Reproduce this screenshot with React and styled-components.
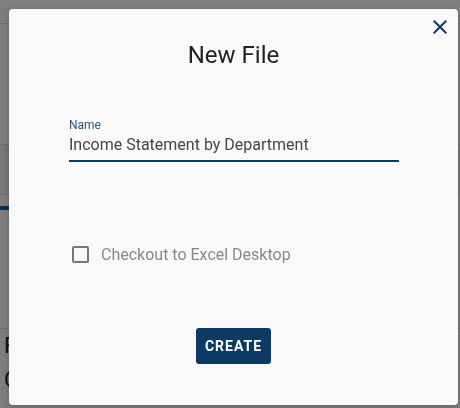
import styled, { createGlobalStyle } from "styled-components";

const GlobalStyle = createGlobalStyle`
  html, body {
    margin: 0;
    padding: 0;
    background: #ffffff;
    font-family: Roboto, "Liberation Sans", Arial, sans-serif;
  }
  * { box-sizing: border-box; }
`;

const Page = styled.div`
  width: 460px;
  height: 408px;
  overflow: hidden;
  background: #fff;
  display: flex;
  flex-direction: column;
`;

const PageHeader = styled.div`
  height: 24px;
  border-bottom: 1px solid #d8d8d8;
`;

const PageSection = styled.div`
  height: ${(p) => p.$h}px;
  background: ${(p) => p.$bg || "#fff"};
  border-bottom: 1px solid #dcdcdc;
`;

const BlueBar = styled.div`
  height: 4px;
  width: 60px;
  margin-top: 11px;
  background: #0b5fa5;
`;

const PageText = styled.div`
  padding-left: 4px;
  font-size: 22px;
  line-height: 34px;
  color: #1a1a1a;
`;

const Backdrop = styled.div`
  position: fixed;
  inset: 0;
  background: rgba(0, 0, 0, 0.5);
  padding: 9px 2px 3px 9px;
  display: flex;
`;

const Dialog = styled.div`
  position: relative;
  flex: 1;
  background: #f9f9f9;
  border-radius: 4px;
  box-shadow: 0 2px 8px rgba(0, 0, 0, 0.25);
  display: flex;
  flex-direction: column;
  padding: 32px 0 0 60px;
`;

const CloseButton = styled.button`
  position: absolute;
  top: 6px;
  right: 6px;
  width: 24px;
  height: 24px;
  padding: 0;
  border: 0;
  background: transparent;
  color: #0d3a63;
  display: flex;
  cursor: pointer;
`;

const Title = styled.h2`
  margin: 0 0 0 -60px;
  font-size: 24px;
  font-weight: 400;
  line-height: 28px;
  color: #222;
  text-align: center;
`;

const Field = styled.div`
  width: 330px;
  margin-top: 49px;
  display: flex;
  flex-direction: column;
`;

const Label = styled.label`
  font-size: 12px;
  line-height: 14px;
  color: #2b5680;
`;

const Input = styled.input`
  margin-top: 3px;
  border: 0;
  border-bottom: 2px solid #0b3a66;
  background: transparent;
  padding: 0 0 6px;
  font-family: inherit;
  font-size: 16px;
  line-height: 19px;
  color: #454545;
  outline: none;
`;

const CheckRow = styled.label`
  margin-top: 83px;
  margin-left: 3px;
  display: flex;
  align-items: center;
  gap: 12px;
  font-size: 16px;
  color: #888;
`;

const Box = styled.span`
  width: 17px;
  height: 17px;
  border: 2px solid #777;
  border-radius: 2px;
`;

const Actions = styled.div`
  margin: 64px 0 0 -60px;
  display: flex;
  justify-content: center;
`;

const PrimaryButton = styled.button`
  width: 75px;
  height: 36px;
  border: 0;
  border-radius: 3px;
  background: #0c3a64;
  color: #fff;
  font-family: inherit;
  font-size: 14px;
  font-weight: 700;
  letter-spacing: 1px;
  cursor: pointer;
`;

const CloseIcon = () => (
  <svg width="24" height="24" viewBox="0 0 24 24" fill="currentColor">
    <path d="M19 6.41 17.59 5 12 10.59 6.41 5 5 6.41 10.59 12 5 17.59 6.41 19 12 13.41 17.59 19 19 17.59 13.41 12z" />
  </svg>
);

export default function App() {
  return (
    <>
      <GlobalStyle />
      <Page>
        <PageHeader />
        <PageSection $h={121} />
        <PageSection $h={50} $bg="#f2f2f2" />
        <BlueBar />
        <PageSection $h={119} />
        <PageText>F</PageText>
        <PageText>C</PageText>
      </Page>
      <Backdrop>
        <Dialog role="dialog">
          <CloseButton aria-label="Close">
            <CloseIcon />
          </CloseButton>
          <Title>New File</Title>
          <Field>
            <Label>Name</Label>
            <Input defaultValue="Income Statement by Department" />
          </Field>
          <CheckRow>
            <Box />
            Checkout to Excel Desktop
          </CheckRow>
          <Actions>
            <PrimaryButton>CREATE</PrimaryButton>
          </Actions>
        </Dialog>
      </Backdrop>
    </>
  );
}
